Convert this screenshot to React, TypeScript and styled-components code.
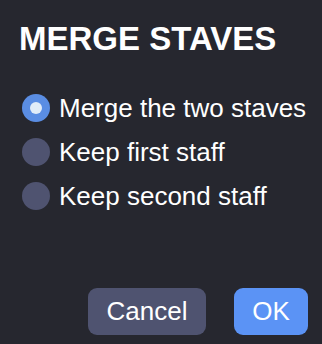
import { useState } from "react";
import styled, { createGlobalStyle } from "styled-components";

const GlobalStyle = createGlobalStyle`
  html, body {
    margin: 0;
    padding: 0;
    background: #26272f;
  }
  body {
    font-family: "Liberation Sans", Arial, Helvetica, sans-serif;
  }
`;

const Dialog = styled.div`
  display: flex;
  flex-direction: column;
  width: 322px;
  height: 344px;
  box-sizing: border-box;
  padding: 20px 14px 9px 19px;
  background: #26272f;
  color: #ffffff;
`;

const Title = styled.h1`
  margin: 0;
  font-size: 33px;
  line-height: 37px;
  font-weight: 700;
  letter-spacing: 0;
`;

const Options = styled.div`
  display: flex;
  flex-direction: column;
  margin-top: 29px;
`;

const Option = styled.label`
  display: flex;
  align-items: center;
  gap: 9px;
  height: 44px;
  padding-left: 3px;
  font-size: 26px;
  cursor: pointer;
`;

const Dot = styled.span<{ $checked: boolean }>`
  position: relative;
  flex: none;
  width: 28px;
  height: 28px;
  border-radius: 50%;
  background: ${(p) => (p.$checked ? "#5a8de3" : "#4f5370")};

  &::after {
    content: "";
    display: ${(p) => (p.$checked ? "block" : "none")};
    position: absolute;
    left: 8px;
    top: 8px;
    width: 12px;
    height: 12px;
    border-radius: 50%;
    background: #e1ecf8;
  }
`;

const Footer = styled.div`
  display: flex;
  justify-content: flex-end;
  gap: 28px;
  margin-top: auto;
`;

const Button = styled.button<{ $primary?: boolean }>`
  width: ${(p) => (p.$primary ? 74 : 118)}px;
  height: 47px;
  padding: 0;
  border: 0;
  border-radius: 9px;
  background: ${(p) => (p.$primary ? "#5b93f5" : "#4f5370")};
  color: #ffffff;
  font-family: inherit;
  font-size: 26px;
  cursor: pointer;
`;

const choices = ["Merge the two staves", "Keep first staff", "Keep second staff"];

export default function App() {
  const [picked, setPicked] = useState(0);
  return (
    <>
      <GlobalStyle />
      <Dialog>
        <Title>MERGE STAVES</Title>
        <Options>
          {choices.map((c, i) => (
            <Option key={c} onClick={() => setPicked(i)}>
              <Dot $checked={picked === i} />
              {c}
            </Option>
          ))}
        </Options>
        <Footer>
          <Button>Cancel</Button>
          <Button $primary>OK</Button>
        </Footer>
      </Dialog>
    </>
  );
}
